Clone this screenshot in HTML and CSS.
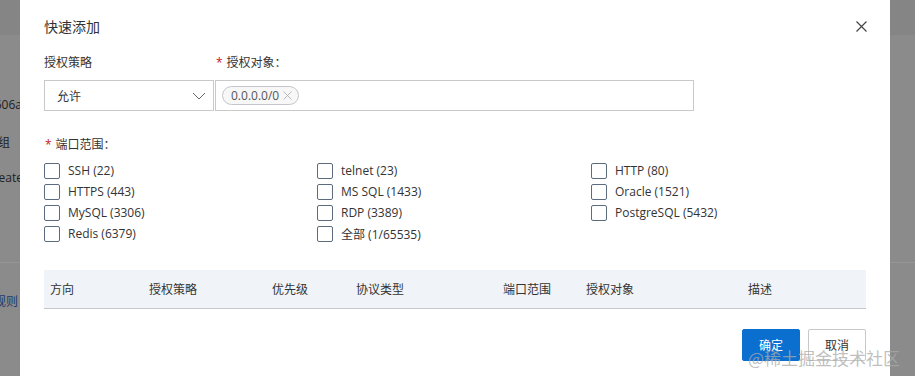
FILE: index.html
```html
<!DOCTYPE html>
<html lang="zh-CN">

<head>
    <meta charset="UTF-8">
    <title>快速添加</title>
    <link rel="stylesheet" href="styles.css">
</head>

<body>
    <div class="page">
        <!-- 左侧被遮罩挡住的页面内容 -->
        <div class="side side-left">
            <div class="band"></div>
            <div class="peek peek-1">a7b9606a</div>
            <div class="peek peek-2">分组</div>
            <div class="peek peek-3">create</div>
            <div class="peek-line"></div>
            <div class="peek peek-4">规则</div>
        </div>

        <div class="modal">
            <div class="modal-head">
                <span class="title">快速添加</span>
                <svg class="close" width="11" height="11" viewBox="0 0 11 11">
                    <path d="M0.5 0.5 L10.5 10.5 M10.5 0.5 L0.5 10.5" stroke="#444" stroke-width="1.2" fill="none" />
                </svg>
            </div>

            <div class="form-row">
                <div class="field field-policy">
                    <div class="label">授权策略</div>
                    <div class="select">
                        <span>允许</span>
                        <svg width="14" height="8" viewBox="0 0 14 8">
                            <polyline points="1,1 7,7 13,1" fill="none" stroke="#666" stroke-width="1" />
                        </svg>
                    </div>
                </div>
                <div class="field field-target">
                    <div class="label"><i class="req">*</i>授权对象：</div>
                    <div class="input">
                        <span class="tag">0.0.0.0/0
                            <svg class="tag-x" width="9" height="9" viewBox="0 0 9 9">
                                <path d="M0.5 0.5 L8.5 8.5 M8.5 0.5 L0.5 8.5" stroke="#b8b8b8" stroke-width="1" fill="none" />
                            </svg>
                        </span>
                    </div>
                </div>
            </div>

            <div class="label port-label"><i class="req">*</i>端口范围：</div>
            <div class="checks">
                <label class="check"><span class="box"></span>SSH (22)</label>
                <label class="check"><span class="box"></span>telnet (23)</label>
                <label class="check"><span class="box"></span>HTTP (80)</label>
                <label class="check"><span class="box"></span>HTTPS (443)</label>
                <label class="check"><span class="box"></span>MS SQL (1433)</label>
                <label class="check"><span class="box"></span>Oracle (1521)</label>
                <label class="check"><span class="box"></span>MySQL (3306)</label>
                <label class="check"><span class="box"></span>RDP (3389)</label>
                <label class="check"><span class="box"></span>PostgreSQL (5432)</label>
                <label class="check"><span class="box"></span>Redis (6379)</label>
                <label class="check"><span class="box"></span>全部 (1/65535)</label>
            </div>

            <table class="rules">
                <thead>
                    <tr>
                        <th class="c1">方向</th>
                        <th class="c2">授权策略</th>
                        <th class="c3">优先级</th>
                        <th class="c4">协议类型</th>
                        <th class="c5">端口范围</th>
                        <th class="c6">授权对象</th>
                        <th class="c7">描述</th>
                    </tr>
                </thead>
            </table>

            <div class="footer">
                <button type="button" class="btn btn-primary">确定</button>
                <button type="button" class="btn">取消</button>
            </div>
        </div>

        <div class="side side-right">
            <div class="band"></div>
            <div class="peek-line"></div>
        </div>

        <div class="watermark">@稀土掘金技术社区</div>
    </div>
</body>

</html>
```

FILE: styles.css
```css
* {
    box-sizing: border-box;
}

body {
    margin: 0;
    font-family: "Open Sans", "Noto Sans CJK SC", sans-serif;
    font-size: 12px;
    color: #333;
}

.page {
    position: relative;
    display: flex;
    width: 915px;
    height: 376px;
    overflow: hidden;
    background-color: #8b8b8b;
}

/* 遮罩两侧 */
.side {
    position: relative;
    overflow: hidden;
    flex-shrink: 0;
}

.side-left {
    width: 20px;
}

.side-right {
    width: 25px;
}

.band {
    height: 35px;
    background-color: #858585;
}

.peek {
    position: absolute;
    white-space: nowrap;
    color: #1e1e1e;
    font-size: 12px;
    line-height: 16px;
}

.peek-1 {
    top: 97px;
    right: -2px;
}

.peek-2 {
    top: 135px;
    right: 10px;
}

.peek-3 {
    top: 170px;
    right: -3px;
}

.peek-4 {
    top: 294px;
    right: 2px;
    color: #1f3a6a;
}

.peek-line {
    position: absolute;
    top: 262px;
    left: 0;
    right: 0;
    border-top: 1px solid #969696;
}

/* 弹窗 */
.modal {
    width: 870px;
    flex-shrink: 0;
    background-color: #fff;
    padding: 16px 24px 0;
}

.modal-head {
    display: flex;
    justify-content: space-between;
    align-items: center;
    height: 20px;
}

.title {
    font-size: 14px;
    color: #333;
}

.close {
    margin-right: -1px;
}

.form-row {
    display: flex;
    gap: 1px;
    margin-top: 18px;
}

.label {
    height: 18px;
    line-height: 18px;
    color: #333;
}

.req {
    font-style: normal;
    color: #c8161d;
    margin: 0 4px 0 1px;
}

.field .label {
    margin-bottom: 8px;
}

.field-policy {
    width: 170px;
}

.field-target {
    width: 479px;
}

.select,
.input {
    height: 31px;
    border: 1px solid #c9c9c9;
    background-color: #fff;
}

.select {
    display: flex;
    align-items: center;
    justify-content: space-between;
    padding: 0 7px 0 12px;
}

.input {
    display: flex;
    align-items: center;
    padding: 0 6px;
}

.tag {
    display: inline-flex;
    align-items: center;
    height: 19px;
    padding: 0 6px 0 8px;
    border: 1px solid #c4c6cc;
    border-radius: 10px;
    background-color: #f7f7f8;
    color: #555;
    font-size: 12px;
}

.tag-x {
    margin-left: 4px;
}

.port-label {
    margin-top: 25px;
}

.checks {
    display: grid;
    grid-template-columns: 273px 274px 1fr;
    grid-auto-rows: 21px;
    margin-top: 6px;
}

.check {
    display: flex;
    align-items: center;
    gap: 8px;
    color: #333;
}

.box {
    width: 16px;
    height: 16px;
    border: 1px solid #5c6b7d;
    border-radius: 2px;
}

.rules {
    width: 100%;
    margin-top: 26px;
    border-collapse: collapse;
    table-layout: fixed;
}

.rules th {
    height: 38px;
    padding: 0 0 0 6px;
    text-align: left;
    font-weight: normal;
    color: #333;
    background-color: #f0f3f8;
    border-bottom: 1px solid #c6c8cc;
}

.c1 { width: 99px; }
.c2 { width: 123px; }
.c3 { width: 84px; }
.c4 { width: 147px; }
.c5 { width: 83px; }
.c6 { width: 162px; }
.c7 { width: 124px; }

.footer {
    display: flex;
    justify-content: flex-end;
    gap: 8px;
    margin-top: 20px;
}

.btn {
    width: 58px;
    height: 32px;
    border: 1px solid #c9c9c9;
    border-radius: 2px;
    background-color: #fff;
    color: #333;
    font-family: "Noto Sans CJK SC", sans-serif;
    font-size: 12px;
}

.btn-primary {
    border-color: #0b6fd0;
    background-color: #0b6fd0;
    color: #fff;
}

.watermark {
    position: absolute;
    left: 748px;
    top: 345px;
    font-family: "Noto Sans CJK SC", serif;
    font-size: 17px;
    color: rgba(170, 170, 170, 0.75);
    white-space: nowrap;
}
```
